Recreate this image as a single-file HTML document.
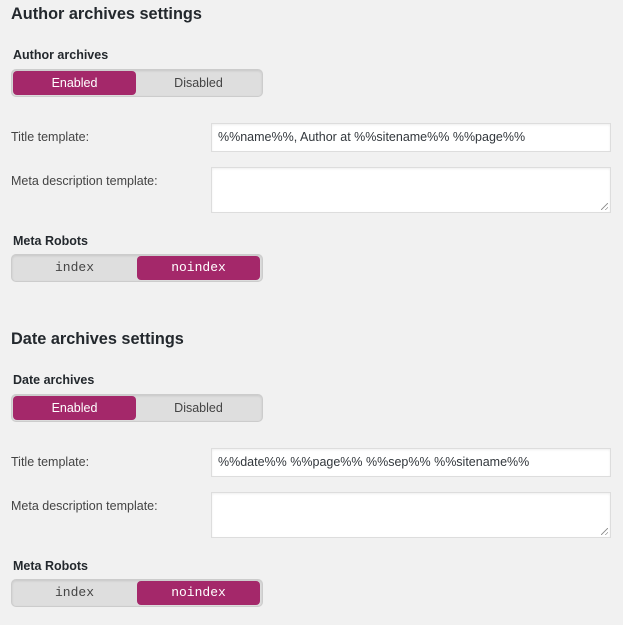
<!DOCTYPE html>
<html><head><meta charset="utf-8"><style>
body{margin:0;background:#f1f1f1;width:623px;height:615px;overflow:hidden;font-family:"Liberation Sans",sans-serif;color:#444;position:relative}
.a{position:absolute;left:0;width:623px;height:300px}
.a *{white-space:nowrap}
h2{position:absolute;margin:0;font-size:16.3px;font-weight:bold;color:#23282d;left:11px}
.lbl{position:absolute;left:13px;font-size:12.5px;font-weight:bold;color:#23282d}
.fl{position:absolute;left:11px;font-size:12.5px;color:#444}
.tg{position:absolute;left:11px;width:250px;height:26px;background:#dedede;border:1px solid #ccc;border-radius:5px;box-shadow:inset 0 1px 2px rgba(0,0,0,.1)}
.tg span{position:absolute;top:1px;height:24px;width:123px;line-height:24px;text-align:center;font-size:12.5px;color:#444;border-radius:4px}
.tg span.on{background:#a4286a;color:#fff}
.mono span{font-family:"Liberation Mono",monospace;font-size:13px}
.in{position:absolute;left:211px;background:#fff;border:1px solid #ddd;box-shadow:inset 0 1px 2px rgba(0,0,0,.07);font-size:12.5px;color:#32373c;box-sizing:border-box}
.in.t{height:29px;line-height:27px;padding-left:6px;width:400px}
.in.x{height:46px;width:400px}
.rz{position:absolute;right:2px;bottom:2px;width:7px;height:7px;background:linear-gradient(135deg,transparent 45%,#999 45%,#999 55%,transparent 55%,transparent 75%,#999 75%,#999 85%,transparent 85%)}
</style></head><body>
<div class="a" style="top:0">
<h2 style="top:5px">Author archives settings</h2>
<div class="lbl" style="top:48px">Author archives</div>
<div class="tg" style="top:69px"><span class="on" style="left:1px">Enabled</span><span style="left:125px">Disabled</span></div>
<div class="fl" style="top:130px">Title template:</div>
<div class="in t" style="top:123px">%%name%%, Author at %%sitename%% %%page%%</div>
<div class="fl" style="top:174px">Meta description template:</div>
<div class="in x" style="top:167px"><div class="rz"></div></div>
<div class="lbl" style="top:234px">Meta Robots</div>
<div class="tg mono" style="top:254px"><span style="left:1px">index</span><span class="on" style="left:125px">noindex</span></div>
</div>
<div class="a" style="top:325px">
<h2 style="top:5px">Date archives settings</h2>
<div class="lbl" style="top:48px">Date archives</div>
<div class="tg" style="top:69px"><span class="on" style="left:1px">Enabled</span><span style="left:125px">Disabled</span></div>
<div class="fl" style="top:130px">Title template:</div>
<div class="in t" style="top:123px">%%date%% %%page%% %%sep%% %%sitename%%</div>
<div class="fl" style="top:174px">Meta description template:</div>
<div class="in x" style="top:167px"><div class="rz"></div></div>
<div class="lbl" style="top:234px">Meta Robots</div>
<div class="tg mono" style="top:254px"><span style="left:1px">index</span><span class="on" style="left:125px">noindex</span></div>
</div>
</body></html>
